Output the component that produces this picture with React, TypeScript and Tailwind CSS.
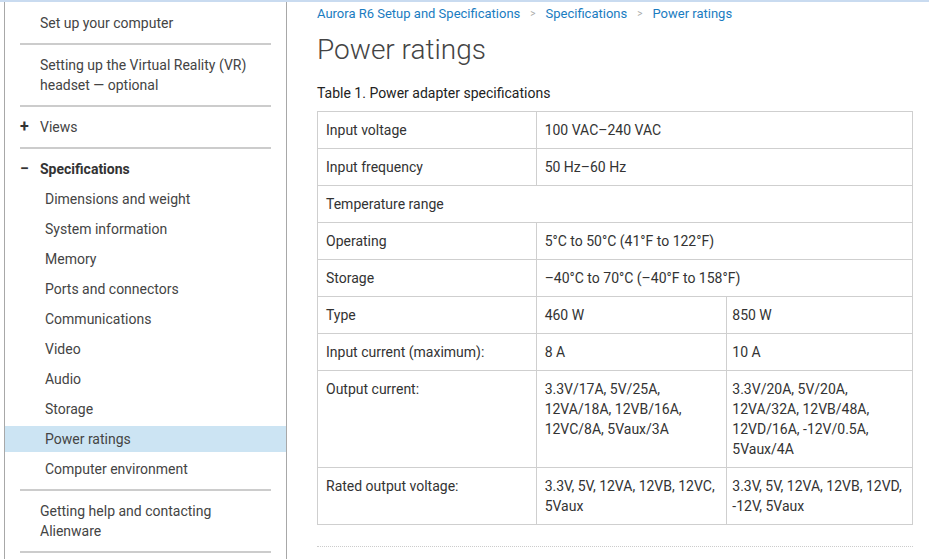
import React from "react";

type Row = { label: string; a: string[]; b?: string[] };

const navTop = [
  { label: ["Set up your computer"] },
  { label: ["Setting up the Virtual Reality (VR)", "headset — optional"] },
];

const specs = [
  "Dimensions and weight",
  "System information",
  "Memory",
  "Ports and connectors",
  "Communications",
  "Video",
  "Audio",
  "Storage",
  "Power ratings",
  "Computer environment",
];

const rows: Row[] = [
  { label: "Input voltage", a: ["100 VAC–240 VAC"] },
  { label: "Input frequency", a: ["50 Hz–60 Hz"] },
  { label: "Temperature range", a: [] },
  { label: "Operating", a: ["5°C to 50°C (41°F to 122°F)"] },
  { label: "Storage", a: ["–40°C to 70°C (–40°F to 158°F)"] },
  { label: "Type", a: ["460 W"], b: ["850 W"] },
  { label: "Input current (maximum):", a: ["8 A"], b: ["10 A"] },
  {
    label: "Output current:",
    a: ["3.3V/17A, 5V/25A,", "12VA/18A, 12VB/16A,", "12VC/8A, 5Vaux/3A"],
    b: ["3.3V/20A, 5V/20A,", "12VA/32A, 12VB/48A,", "12VD/16A, -12V/0.5A,", "5Vaux/4A"],
  },
  {
    label: "Rated output voltage:",
    a: ["3.3V, 5V, 12VA, 12VB, 12VC,", "5Vaux"],
    b: ["3.3V, 5V, 12VA, 12VB, 12VD,", "-12V, 5Vaux"],
  },
];

function Sep() {
  return <div className="ml-[15px] mr-[15px] h-[2px] bg-[#cccccc]" />;
}

function Lines({ items }: { items: string[] }) {
  return (
    <>
      {items.map((t) => (
        <div key={t}>{t}</div>
      ))}
    </>
  );
}

export default function App() {
  return (
    <div
      className="w-[929px] h-[559px] overflow-hidden bg-white text-[14px] leading-5 text-[#444]"
      style={{ fontFamily: "Roboto, 'Liberation Sans', sans-serif" }}
    >
      <div className="h-[2px] bg-[#c9dbf0]" />
      <div className="flex pl-[4px] h-[557px]">
        {/* Sidebar */}
        <aside className="w-[283px] shrink-0 border-l border-r border-[#a8a8a8]">
          {navTop.map((n, i) => (
            <React.Fragment key={i}>
              <div className={"pl-[35px] pr-4 pb-[10px] " + (i === 0 ? "pt-[11px]" : "pt-[10px]")}>
                <Lines items={n.label} />
              </div>
              <Sep />
            </React.Fragment>
          ))}
          <div className="flex items-center pl-[15px] pt-[10px] pb-[10px]">
            <span className="w-5 text-[16px] font-bold text-[#333]">+</span>
            <span>Views</span>
          </div>
          <Sep />
          <div className="pt-[10px] pb-[7px]">
            <div className="flex items-center pl-[15px]">
              <span className="w-5 text-[16px] font-bold text-[#333]">−</span>
              <span className="font-bold text-[#333]">Specifications</span>
            </div>
            <div className="flex flex-col gap-1 pt-[7px]">
              {specs.map((s) => (
                <div
                  key={s}
                  className={
                    "h-[26px] flex items-center pl-[40px] " +
                    (s === "Power ratings" ? "bg-[#cce4f3]" : "")
                  }
                >
                  {s}
                </div>
              ))}
            </div>
          </div>
          <Sep />
          <div className="pl-[35px] pr-4 pt-[10px] pb-[10px]">
            <div>Getting help and contacting</div>
            <div>Alienware</div>
          </div>
          <Sep />
        </aside>

        {/* Main content */}
        <main className="flex-1 pl-[30px] pr-[16px]">
          <nav className="flex items-center gap-[10px] pt-[2px] text-[13px] leading-5 text-[#1a7cc1]">
            <span>Aurora R6 Setup and Specifications</span>
            <span className="text-[#aaaaaa] text-[10px]">&gt;</span>
            <span>Specifications</span>
            <span className="text-[#aaaaaa] text-[10px]">&gt;</span>
            <span>Power ratings</span>
          </nav>
          <h1 className="mt-[8px] text-[28px] leading-9 font-light text-[#444]">Power ratings</h1>
          <div className="mt-[15px] text-[#222]">Table 1. Power adapter specifications</div>
          <table className="mt-[8px] w-[596px] border-collapse text-[#333]">
            <colgroup>
              <col className="w-[219px]" />
              <col className="w-[191px]" />
              <col className="w-[186px]" />
            </colgroup>
            <tbody>
              {rows.map((r) => (
                <tr key={r.label}>
                  <td
                    colSpan={r.a.length === 0 ? 3 : 1}
                    className="border border-[#cfcfcf] px-2 py-2 align-top"
                  >
                    {r.label}
                  </td>
                  {r.a.length > 0 && (
                    <td
                      colSpan={r.b ? 1 : 2}
                      className="border border-[#cfcfcf] px-2 py-2 align-top"
                    >
                      <Lines items={r.a} />
                    </td>
                  )}
                  {r.b && (
                    <td className="border border-[#cfcfcf] px-[5px] py-2 align-top">
                      <Lines items={r.b} />
                    </td>
                  )}
                </tr>
              ))}
            </tbody>
          </table>
          <div className="mt-[21px] w-[596px] border-t border-dotted border-[#cccccc]" />
        </main>
      </div>
    </div>
  );
}
